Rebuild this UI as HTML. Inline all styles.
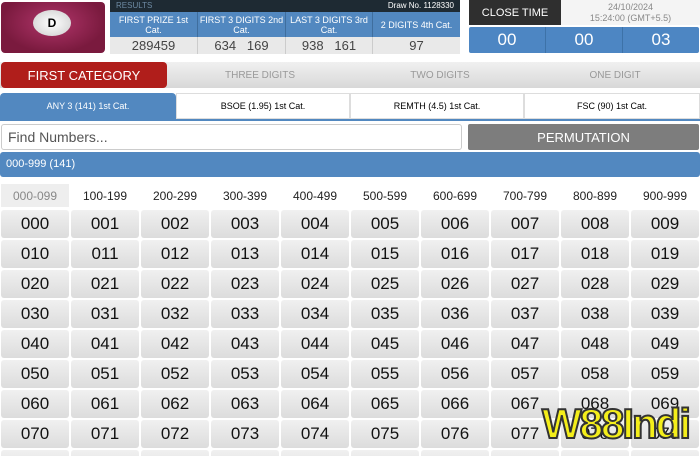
<!DOCTYPE html><html style="overflow:hidden;height:456px"><head><style>
*{margin:0;padding:0;box-sizing:border-box}
body{width:700px;height:456px;overflow:hidden;background:#fff;font-family:"Liberation Sans",sans-serif;position:relative}
.a{position:absolute}
.c{display:flex;align-items:center;justify-content:center;text-align:center}
.cell{position:absolute;width:68px;height:28px;background:linear-gradient(#f0f0f0,#dcdcdc);border-radius:3px;font-size:17px;color:#111;display:flex;align-items:center;justify-content:center}
</style></head><body>
<div class="a" style="left:1px;top:2px;width:104px;height:51px;border-radius:4px;background:radial-gradient(ellipse at 50% 40%,#b0356a,#7a1a3e 70%)"></div>
<div class="a c" style="left:33px;top:10px;width:38px;height:26px;border-radius:50%;background:radial-gradient(#fff,#ccc);font-weight:bold;font-size:12px">D</div>
<div class="a" style="left:110px;top:0;width:350px;height:12px;background:#1e2a33;color:#6d8aa3;font-size:8px;padding-left:6px;line-height:12px">RESULTS<span style="float:right;color:#fff;margin-right:6px">Draw No. 1128330</span></div>
<div class="a" style="left:110px;top:12px;width:350px;height:25px;background:#5288c0;display:flex;color:#fff;font-size:9px">
<div class="c" style="width:88px;border-right:1px solid #3f6e9e">FIRST PRIZE 1st Cat.</div><div class="c" style="width:88px;border-right:1px solid #3f6e9e">FIRST 3 DIGITS 2nd Cat.</div><div class="c" style="width:87px;border-right:1px solid #3f6e9e">LAST 3 DIGITS 3rd Cat.</div><div class="c" style="width:87px">2 DIGITS 4th Cat.</div></div>
<div class="a" style="left:110px;top:37px;width:350px;height:17px;background:#e9e9e9;display:flex;color:#444;font-size:13px">
<div class="c" style="width:88px;border-right:1px solid #ccc">289459</div><div class="c" style="width:88px;border-right:1px solid #ccc">634&nbsp;&nbsp;&nbsp;169</div><div class="c" style="width:87px;border-right:1px solid #ccc">938&nbsp;&nbsp;&nbsp;161</div><div class="c" style="width:87px">97</div></div>
<div class="a c" style="left:469px;top:0;width:92px;height:25px;background:#2f2f2f;color:#fff;font-size:11px">CLOSE TIME</div>
<div class="a c" style="left:561px;top:0;width:139px;height:25px;background:#f4f4f4;color:#888;font-size:9px;line-height:11px">24/10/2024<br>15:24:00 (GMT+5.5)</div>
<div class="a" style="left:469px;top:27px;width:230px;height:26px;background:#4d86c3;border-radius:2px;display:flex;color:#fff;font-size:17px">
<div class="c" style="flex:1;border-right:1px solid #3d72a8">00</div><div class="c" style="flex:1;border-right:1px solid #3d72a8">00</div><div class="c" style="flex:1">03</div></div>
<div class="a" style="left:0;top:62px;width:700px;height:26px;background:linear-gradient(#f0f0f0,#d8d8d8)"></div>
<div class="a c" style="left:1px;top:62px;width:166px;height:26px;background:#b01e1b;border-radius:4px;color:#fff;font-size:13px">FIRST CATEGORY</div>
<div class="a c" style="left:170px;top:62px;width:180px;height:26px;color:#999;font-size:10px">THREE DIGITS</div>
<div class="a c" style="left:350px;top:62px;width:180px;height:26px;color:#999;font-size:10px">TWO DIGITS</div>
<div class="a c" style="left:530px;top:62px;width:170px;height:26px;color:#999;font-size:10px">ONE DIGIT</div>
<div class="a" style="left:0;top:93px;width:700px;height:28px;border-bottom:2px solid #5288c0;display:flex;font-size:9px">
<div class="c" style="width:176px;background:#5288c0;color:#fff;border-radius:4px 4px 0 0">ANY 3 (141) 1st Cat.</div>
<div class="c" style="width:174px;border:1px solid #ddd">BSOE (1.95) 1st Cat.</div>
<div class="c" style="width:174px;border:1px solid #ddd">REMTH (4.5) 1st Cat.</div>
<div class="c" style="width:176px;border:1px solid #ddd">FSC (90) 1st Cat.</div></div>
<div class="a" style="left:1px;top:124px;width:461px;height:26px;border:1px solid #ccc;border-radius:3px;font-size:14px;color:#555;padding-left:6px;line-height:24px">Find Numbers...</div>
<div class="a c" style="left:468px;top:124px;width:231px;height:26px;background:#7d7d7d;color:#fff;font-size:13px;border-radius:2px">PERMUTATION</div>
<div class="a" style="left:0;top:152px;width:700px;height:25px;background:#5288c0;color:#fff;font-size:11px;padding-left:6px;line-height:25px;border-radius:3px">000-999 (141)</div>
<div id="r"></div>
<div class="a" style="left:542px;top:400px;font-size:42px;font-weight:bold;color:#f4ee1a;-webkit-text-stroke:2px #333;letter-spacing:-2px;white-space:nowrap">W88Indi</div>
<script>
var h='';var rg=['000-099','100-199','200-299','300-399','400-499','500-599','600-699','700-799','800-899','900-999'];
for(var i=0;i<10;i++)h+='<div class="a c" style="left:'+(i*70+1)+'px;top:184px;width:68px;height:23px;font-size:12px;color:'+(i?'#222':'#888')+';background:'+(i?'none':'#eee')+'">'+rg[i]+'</div>';
for(var r=0;r<9;r++)for(var c=0;c<10;c++){h+='<div class="cell" style="left:'+(c*70+1)+'px;top:'+(210+r*30)+'px">0'+r+c+'</div>';}
document.getElementById('r').innerHTML=h;
</script>
</body></html>
